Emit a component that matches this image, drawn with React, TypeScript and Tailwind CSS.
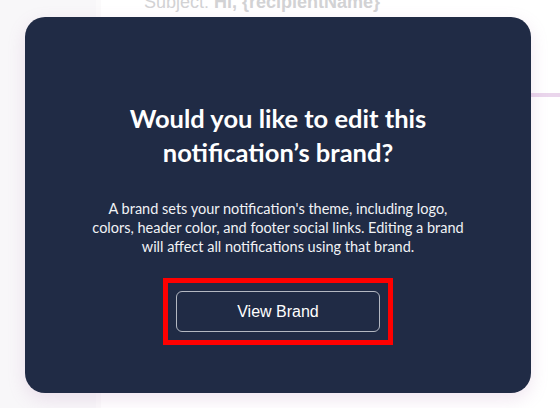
export default function App() {
  return (
    <div className="relative h-[408px] w-[560px] overflow-hidden bg-white font-['Liberation_Sans',sans-serif]">
      {/* page behind the modal */}
      <div className="flex h-full">
        <div className="w-[96px] bg-[#f8f7f9]" />
        <div className="w-[5px] bg-[#fbfafb]" />
        <div className="flex flex-1 flex-col">
          <div className="-mt-[9px] pl-[43px] text-[18px] leading-[22px] text-[#d2d2d4]">
            Subject: <span className="font-bold">Hi, {"{recipientName}"}</span>
          </div>
          <div className="mt-[80px] ml-auto h-[4px] w-[60px] bg-[#ead6ec]" />
        </div>
      </div>

      {/* brand modal */}
      <div className="absolute left-[25px] top-[17px] flex h-[376px] w-[506px] flex-col items-center rounded-[20px] bg-[#202b45] pt-[84px] shadow-[0_6px_18px_rgba(170,110,170,0.18)]">
        <h2 className="text-center font-['Lato',sans-serif] text-[25.5px] font-bold leading-[34px] text-white">
          Would you like to edit this
          <br />
          notification’s brand?
        </h2>
        <p className="mt-[30px] text-center font-['Lato',sans-serif] text-[14.5px] leading-[19px] text-[#f1f2f5]">
          A brand sets your notification's theme, including logo,
          <br />
          colors, header color, and footer social links. Editing a brand
          <br />
          will affect all notifications using that brand.
        </p>
        <div className="mt-[22px] border-[5px] border-[#ff0000] p-[8px]">
          <button
            type="button"
            className="h-[41px] w-[204px] rounded-[6px] border border-[#b4b8c2] text-[16px] text-white"
          >
            View Brand
          </button>
        </div>
      </div>
    </div>
  );
}
